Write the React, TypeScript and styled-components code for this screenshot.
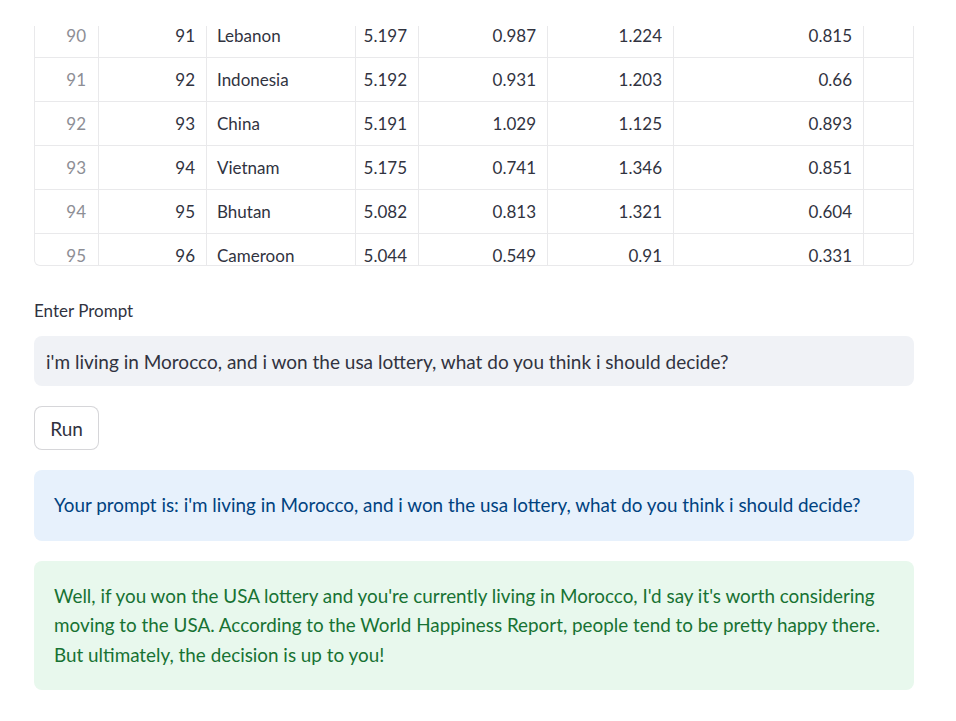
import React from "react";
import styled, { createGlobalStyle } from "styled-components";

const FONT = `Lato, "Liberation Sans", sans-serif`;

const GlobalStyle = createGlobalStyle`
  html, body { margin: 0; padding: 0; background: #ffffff; }
  body { font-family: ${FONT}; color: #31333f; }
`;

const Page = styled.div`
  width: 880px;
  padding: 26px 0 0 34px;
  display: flex;
  flex-direction: column;
`;

const TableViewport = styled.div`
  height: 240px;
  box-sizing: border-box;
  border: 1px solid #e9e9eb;
  border-top: none;
  border-radius: 0 0 6px 6px;
  overflow: hidden;
`;

const COLS = "64px 108px 149px 63px 129px 126px 190px 49px";

type Clip = "top" | "bottom" | undefined;

const Row = styled.div<{ $clip?: Clip }>`
  display: grid;
  grid-template-columns: ${COLS};
  height: ${(p) => (p.$clip === "top" ? "32px" : p.$clip === "bottom" ? "31px" : "44px")};
  border-bottom: ${(p) => (p.$clip === "bottom" ? "none" : "1px solid #e9e9eb")};
  box-sizing: border-box;
`;

const Cell = styled.div<{
  $align?: "left" | "right";
  $index?: boolean;
  $last?: boolean;
  $clip?: Clip;
}>`
  display: flex;
  align-items: ${(p) => (p.$clip ? "flex-start" : "center")};
  justify-content: ${(p) => (p.$align === "left" ? "flex-start" : "flex-end")};
  padding: ${(p) => (p.$clip === "bottom" ? "12px" : "0")} ${(p) => (p.$index ? 12 : 11)}px 0 10px;
  border-right: ${(p) => (p.$last ? "none" : "1px solid #e9e9eb")};
  font-size: 17px;
  line-height: 20px;
  color: ${(p) => (p.$index ? "#8d8e95" : "#31333f")};
  white-space: nowrap;
`;

const Label = styled.div`
  margin-top: 35px;
  font-size: 17px;
  line-height: 20px;
  color: #31333f;
`;

const InputBox = styled.div`
  margin-top: 15px;
  height: 50px;
  background: #f0f2f6;
  border-radius: 8px;
  display: flex;
  align-items: center;
  padding: 0 12px;
  font-size: 19px;
  color: #31333f;
`;

const RunButton = styled.button`
  margin-top: 20px;
  align-self: flex-start;
  width: 65px;
  height: 44px;
  background: #ffffff;
  border: 1px solid rgba(49, 51, 63, 0.2);
  border-radius: 8px;
  font-family: ${FONT};
  font-size: 19px;
  color: #31333f;
  padding: 0;
`;

const Alert = styled.div<{ $kind: "info" | "success" }>`
  margin-top: 20px;
  border-radius: 8px;
  padding: 20px 20px 21px;
  font-size: 18.85px;
  line-height: 29.5px;
  background: ${(p) => (p.$kind === "info" ? "#e7f1fc" : "#e8f8ed")};
  color: ${(p) => (p.$kind === "info" ? "#004280" : "#177233")};
`;

const rows: string[][] = [
  ["90", "91", "Lebanon", "5.197", "0.987", "1.224", "0.815"],
  ["91", "92", "Indonesia", "5.192", "0.931", "1.203", "0.66"],
  ["92", "93", "China", "5.191", "1.029", "1.125", "0.893"],
  ["93", "94", "Vietnam", "5.175", "0.741", "1.346", "0.851"],
  ["94", "95", "Bhutan", "5.082", "0.813", "1.321", "0.604"],
  ["95", "96", "Cameroon", "5.044", "0.549", "0.91", "0.331"],
];

const prompt =
  "i'm living in Morocco, and i won the usa lottery, what do you think i should decide?";

export default function App() {
  return (
    <>
      <GlobalStyle />
      <Page>
        <TableViewport>
          {rows.map((r, i) => {
            const clip: Clip = i === 0 ? "top" : i === rows.length - 1 ? "bottom" : undefined;
            return (
              <Row key={r[0]} $clip={clip}>
                <Cell $index $clip={clip}>{r[0]}</Cell>
                <Cell $clip={clip}>{r[1]}</Cell>
                <Cell $align="left" $clip={clip}>{r[2]}</Cell>
                <Cell $clip={clip}>{r[3]}</Cell>
                <Cell $clip={clip}>{r[4]}</Cell>
                <Cell $clip={clip}>{r[5]}</Cell>
                <Cell $clip={clip}>{r[6]}</Cell>
                <Cell $last $clip={clip} />
              </Row>
            );
          })}
        </TableViewport>
        <Label>Enter Prompt</Label>
        <InputBox>{prompt}</InputBox>
        <RunButton>Run</RunButton>
        <Alert $kind="info">Your prompt is: {prompt}</Alert>
        <Alert $kind="success">
          Well, if you won the USA lottery and you're currently living in Morocco, I'd say it's worth
          considering moving to the USA. According to the World Happiness Report, people tend to be
          pretty happy there. But ultimately, the decision is up to you!
        </Alert>
      </Page>
    </>
  );
}
